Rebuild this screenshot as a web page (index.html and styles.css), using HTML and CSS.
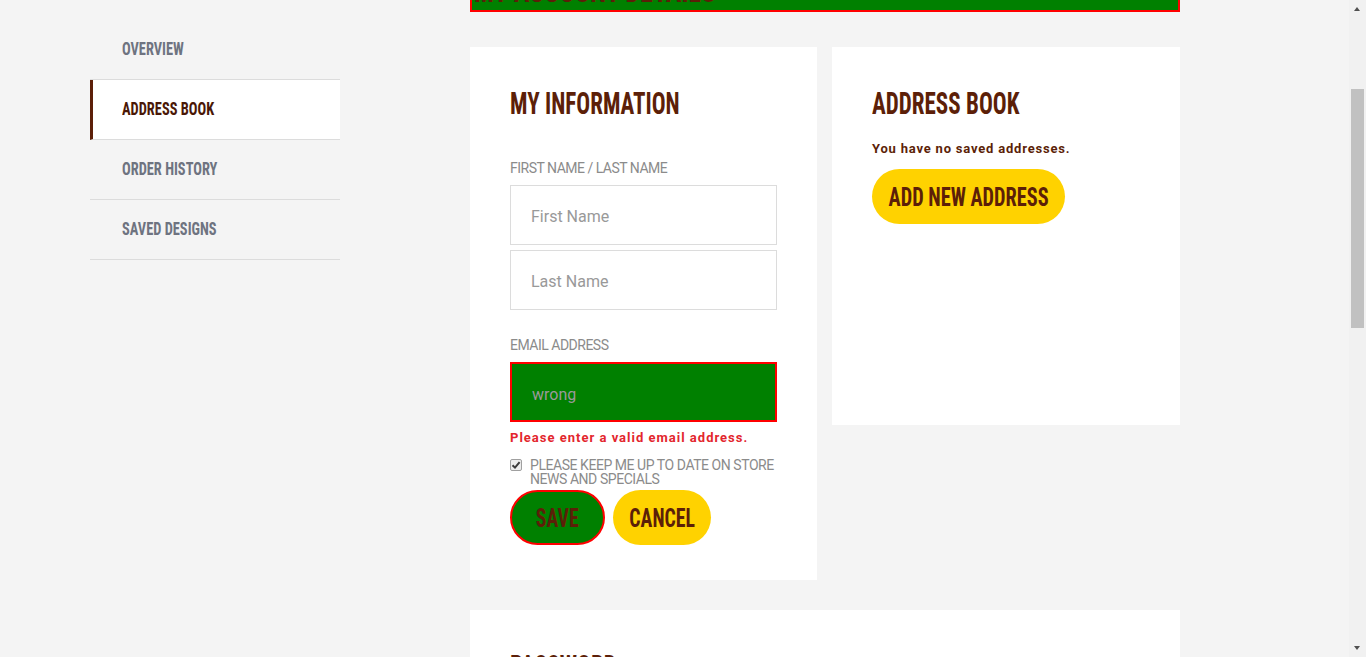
FILE: index.html
```html
<!DOCTYPE html>
<html lang="en">
<head>
<meta charset="utf-8">
<title>My Account - Address Book</title>
<link rel="stylesheet" href="styles.css">
</head>
<body>
<div class="layout">
  <nav class="side-nav">
    <a class="nav-item" href="#"><span class="cond">OVERVIEW</span></a>
    <a class="nav-item active" href="#"><span class="cond">ADDRESS BOOK</span></a>
    <a class="nav-item" href="#"><span class="cond">ORDER HISTORY</span></a>
    <a class="nav-item" href="#"><span class="cond">SAVED DESIGNS</span></a>
  </nav>
  <main class="content">
    <div class="page-title"><h1 class="cond h1">MY ACCOUNT DETAILS</h1></div>
    <div class="card-row">
      <section class="card info-card">
        <h2 class="card-title"><span class="cond">MY INFORMATION</span></h2>
        <div class="field">
          <label class="field-label">FIRST NAME / LAST NAME</label>
          <input class="text-input" type="text" placeholder="First Name">
          <input class="text-input" type="text" placeholder="Last Name">
        </div>
        <div class="field">
          <label class="field-label">EMAIL ADDRESS</label>
          <input class="text-input invalid" type="text" value="wrong">
          <p class="error-msg">Please enter a valid email address.</p>
        </div>
        <label class="check-row">
          <span class="check-box"><svg width="10" height="10" viewBox="0 0 10 10"><path d="M1.5 5.2 L4 7.6 L8.6 2.2" fill="none" stroke="#3a3a3a" stroke-width="2"/></svg></span>
          <span class="check-text">PLEASE KEEP ME UP TO DATE ON STORE NEWS AND SPECIALS</span>
        </label>
        <div class="btn-row">
          <button class="btn btn-save"><span class="cond">SAVE</span></button>
          <button class="btn btn-cancel"><span class="cond">CANCEL</span></button>
        </div>
      </section>
      <section class="card address-card">
        <h2 class="card-title"><span class="cond">ADDRESS BOOK</span></h2>
        <p class="note">You have no saved addresses.</p>
        <button class="btn btn-add"><span class="cond">ADD NEW ADDRESS</span></button>
      </section>
    </div>
    <section class="card password-card">
      <h2 class="card-title"><span class="cond">PASSWORD</span></h2>
      <div class="field">
        <label class="field-label">CURRENT PASSWORD</label>
        <input class="text-input" type="password" placeholder="Current Password">
      </div>
      <div class="field">
        <label class="field-label">NEW PASSWORD</label>
        <input class="text-input" type="password" placeholder="New Password">
        <input class="text-input" type="password" placeholder="Confirm Password">
      </div>
      <div class="btn-row">
        <button class="btn btn-cancel"><span class="cond">SAVE</span></button>
      </div>
    </section>
  </main>
</div>
<div class="fake-scrollbar" aria-hidden="true">
  <span class="sb-arrow sb-up"></span>
  <span class="sb-thumb"></span>
  <span class="sb-arrow sb-down"></span>
</div>
<script src="script.js"></script>
</body>
</html>
```
FILE: styles.css
```css
* { box-sizing: border-box; }
html, body { margin: 0; padding: 0; }
body {
  background: #f4f4f4;
  font-family: Roboto, "DejaVu Sans", sans-serif;
  color: #5c1f08;
}
.cond {
  display: inline-block;
  font-family: Roboto, "DejaVu Sans Condensed", sans-serif;
  font-stretch: 75%;
  font-weight: 700;
  transform: scaleX(0.72);
  transform-origin: left center;
  white-space: nowrap;
}
.layout {
  display: grid;
  grid-template-columns: 250px 710px;
  column-gap: 130px;
  padding: 130px 0 361px 90px;
  align-items: start;
}
/* side nav */
.side-nav {
  margin-top: 84px;
  display: flex;
  flex-direction: column;
}
.nav-item {
  display: block;
  height: 60px;
  line-height: 57px;
  padding-left: 32px;
  border-bottom: 1px solid #dcdcdc;
  color: #6e7380;
  text-decoration: none;
  font-size: 18px;
}
.nav-item .cond { transform: scaleX(0.8); }
.nav-item.active {
  background: #fff;
  border-left: 3px solid #5c1f08;
  padding-left: 29px;
  color: #4a1706;
}
/* main */
.page-title {
  height: 76px;
  background: #008000;
  border: 2px solid #ff0000;
  display: flex;
  align-items: flex-end;
  padding: 0 0 3px 2px;
}
.h1 {
  margin: 0;
  font-size: 32px;
  line-height: 1;
  color: #5c1f08;
  transform: scaleX(0.82);
}
.card-row {
  margin-top: 35px;
  display: flex;
  gap: 15px;
  align-items: flex-start;
}
.card {
  background: #fff;
  padding: 40px;
}
.info-card { width: 347px; padding-bottom: 35px; }
.address-card { width: 348px; min-height: 378px; }
.card-title {
  margin: 0;
  font-size: 32px;
  line-height: 32px;
  font-weight: 700;
  color: #5c1f08;
}
.field { margin-top: 41px; }
.field + .field { margin-top: 27px; }
.field-label {
  display: block;
  font-size: 14px;
  line-height: 16px;
  color: #8b8b8b;
  margin-bottom: 9px;
  letter-spacing: -0.5px;
}
.text-input {
  display: block;
  width: 100%;
  height: 60px;
  border: 1px solid #dcdcdc;
  background: #fff;
  padding: 2px 20px 0;
  font-family: Roboto, sans-serif;
  font-size: 16px;
  color: #999;
  outline: none;
}
.text-input + .text-input { margin-top: 5px; }
.text-input::placeholder { color: #999; }
.text-input.invalid {
  background: #008000;
  border: 2px solid #ff0000;
  color: #9a9a9a;
  padding-top: 4px;
}
.error-msg {
  margin: 8px 0 0;
  font-size: 13px;
  line-height: 16px;
  font-weight: 700;
  color: #e3262d;
  letter-spacing: 1px;
}
.check-row {
  margin-top: 12px;
  display: flex;
  gap: 8px;
  align-items: flex-start;
}
.check-box {
  flex: none;
  width: 12px;
  height: 12px;
  margin-top: 1px;
  border: 1px solid #a0a0a0;
  border-radius: 2px;
  background: #ececec;
  display: flex;
  align-items: center;
  justify-content: center;
}
.check-text {
  font-size: 14px;
  line-height: 14px;
  color: #8b8b8b;
  letter-spacing: -0.45px;
}
.btn-row {
  margin-top: 4px;
  display: flex;
  gap: 8px;
}
.btn {
  height: 55px;
  border-radius: 28px;
  border: none;
  background: #ffd200;
  color: #5c1f08;
  font-size: 26px;
  padding: 0;
  display: flex;
  align-items: center;
  justify-content: center;
  cursor: pointer;
}
.btn .cond { transform: scaleX(0.76); transform-origin: center; }
.btn-add .cond { transform: scaleX(0.78); }
.btn-save {
  width: 95px;
  background: #008000;
  border: 2px solid #ff0000;
}
.btn-cancel { width: 98px; }
.btn-add { width: 193px; }
.note {
  margin: 22px 0 12px;
  font-size: 13px;
  line-height: 16px;
  font-weight: 700;
  letter-spacing: 0.8px;
  color: #5c1f08;
}
.password-card {
  margin-top: 30px;
  width: 710px;
  min-height: 540px;
}
.password-card .text-input { width: 267px; }
.password-card .btn-row { margin-top: 30px; }
/* browser-like scrollbar overlay */
.fake-scrollbar {
  position: fixed;
  top: 0;
  right: 0;
  width: 17px;
  height: 100vh;
  background: #f1f1f1;
}
.sb-thumb {
  position: absolute;
  left: 2px;
  top: 89px;
  width: 13px;
  height: 239px;
  background: #c1c1c1;
}
.sb-arrow {
  position: absolute;
  left: 5px;
  width: 0;
  height: 0;
  border-left: 3.5px solid transparent;
  border-right: 3.5px solid transparent;
}
.sb-up { top: 7px; border-bottom: 4px solid #505050; }
.sb-down { bottom: 7px; border-top: 4px solid #505050; }
```
FILE: script.js
```js
window.scrollTo(0, 194);
window.addEventListener('load', function () { window.scrollTo(0, 194); });
```
